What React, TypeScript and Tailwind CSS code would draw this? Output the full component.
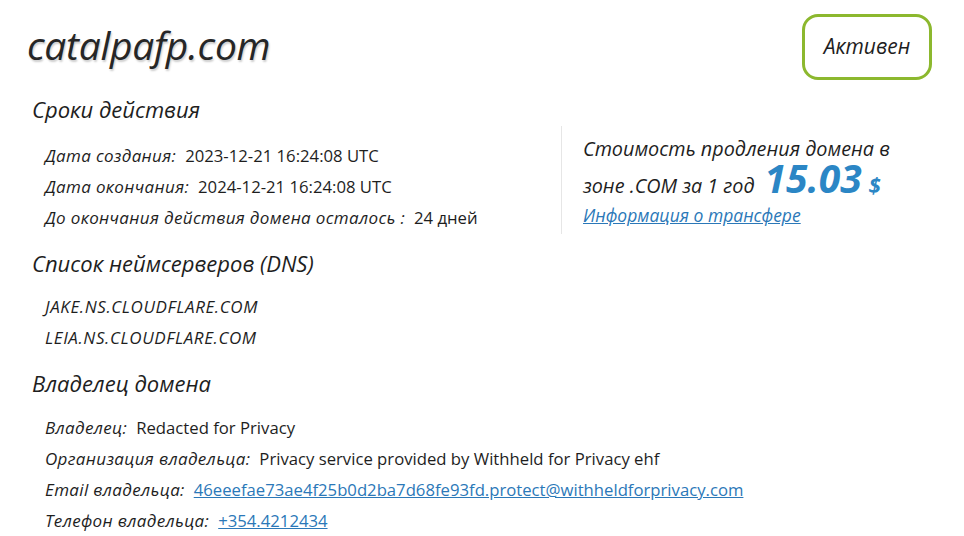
const F = { fontFamily: '"Open Sans", "Noto Sans", sans-serif' };

function Row({ label, children }: { label: string; children: React.ReactNode }) {
  return (
    <div className="flex items-center h-[31px] text-[#1e1e1e]">
      <span className="italic text-[17px] tracking-[0.35px]">{label}</span>
      <span className="ml-[9px] text-[16.7px]">{children}</span>
    </div>
  );
}

export default function App() {
  return (
    <div style={F} className="w-[964px] h-[536px] bg-white overflow-hidden relative text-[#1e1e1e]">
      <div className="flex items-start justify-between pl-[27px] pr-[32px] pt-[14px]">
        <h1 className="italic font-medium text-[39px] leading-[62px] tracking-[-0.3px] text-[#262626] [text-shadow:1px_2px_2px_rgba(0,0,0,0.2)]">
          catalpafp.com
        </h1>
        <div className="w-[130px] h-[66px] border-[3px] border-[#8cb82e] rounded-[16px] flex items-center justify-center italic text-[21px]">
          Активен
        </div>
      </div>

      <div className="pl-[32px] mt-[14px]">
        <h2 className="italic text-[22px] leading-[30px]">Сроки действия</h2>
        <div className="flex mt-[16px]">
          <div className="pl-[13px] w-[529px]">
            <Row label="Дата создания:">2023-12-21 16:24:08 UTC</Row>
            <Row label="Дата окончания:">2024-12-21 16:24:08 UTC</Row>
            <Row label="До окончания действия домена осталось :">24 дней</Row>
          </div>
          <div className="border-l border-[#e6e6e6] pl-[21px] -mt-[14px] h-[108px]">
            <div className="italic text-[19.8px] leading-[28px] pt-[9px]">Стоимость продления домена в</div>
            <div className="italic text-[19.8px] leading-[30px] flex items-baseline">
              <span>зоне .COM за 1 год</span>
              <span className="ml-[10px] font-bold text-[39px] leading-[30px] text-[#2b86c5]">15.03</span>
              <span className="ml-[7px] font-bold text-[22px] text-[#2b86c5]">$</span>
            </div>
            <a className="italic text-[17.5px] leading-[28px] text-[#2b78b8] underline block" href="#">
              Информация о трансфере
            </a>
          </div>
        </div>

        <h2 className="italic text-[22px] leading-[30px] mt-[14px]">Список неймсерверов (DNS)</h2>
        <div className="pl-[13px] mt-[13px] italic text-[17px] tracking-[0.6px] leading-[31px]">
          <div>JAKE.NS.CLOUDFLARE.COM</div>
          <div>LEIA.NS.CLOUDFLARE.COM</div>
        </div>

        <h2 className="italic text-[22px] leading-[30px] mt-[15px]">Владелец домена</h2>
        <div className="pl-[13px] mt-[14px]">
          <Row label="Владелец:">Redacted for Privacy</Row>
          <Row label="Организация владельца:">Privacy service provided by Withheld for Privacy ehf</Row>
          <Row label="Email владельца:">
            <a href="#" className="text-[#2b78b8] underline">46eeefae73ae4f25b0d2ba7d68fe93fd.protect@withheldforprivacy.com</a>
          </Row>
          <Row label="Телефон владельца:">
            <a href="#" className="text-[#2b78b8] underline">+354.4212434</a>
          </Row>
        </div>
      </div>
    </div>
  );
}
